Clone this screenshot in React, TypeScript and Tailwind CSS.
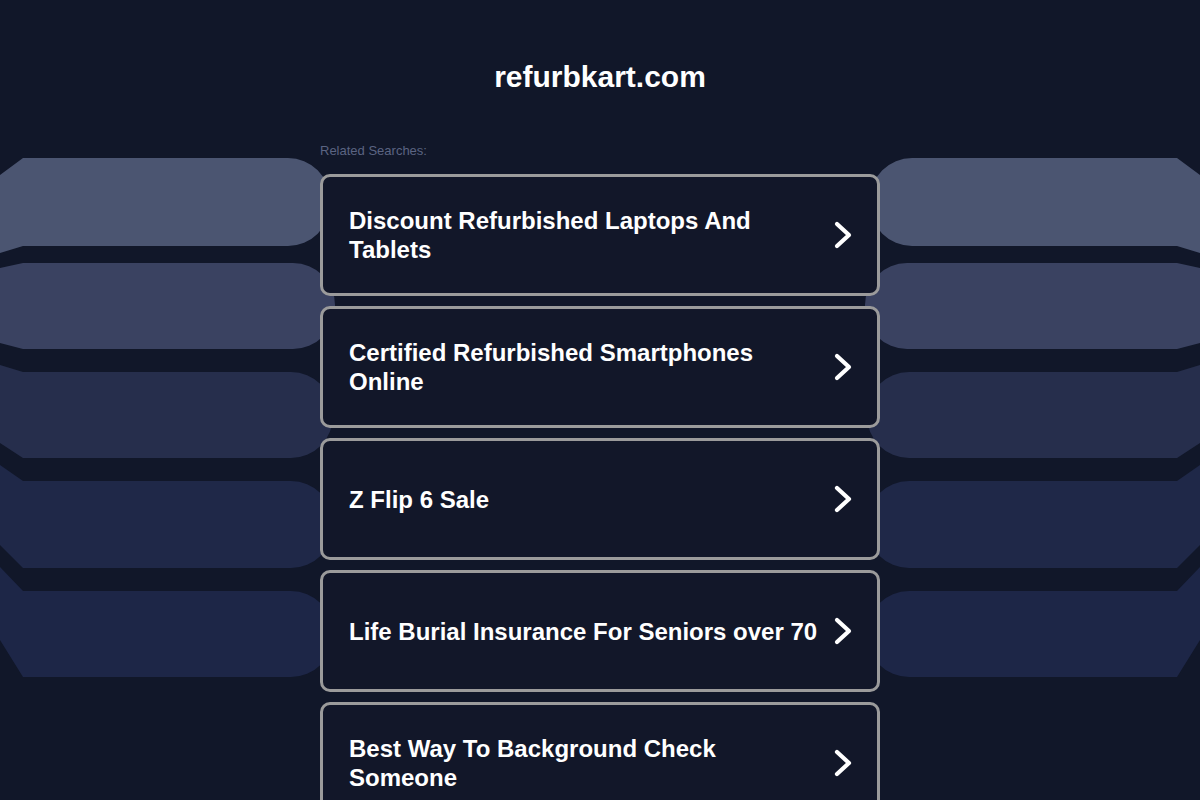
import React from "react";

type Band = {
  top: number;
  bot: number;
  leftTop: number;
  leftBot: number;
  end: number;
  color: string;
};

const bands: Band[] = [
  { top: 158, bot: 246, leftTop: 175, leftBot: 253, end: 330, color: "#4b5571" },
  { top: 263, bot: 349, leftTop: 268, leftBot: 343, end: 335, color: "#3a4261" },
  { top: 372, bot: 458, leftTop: 365, leftBot: 443, end: 333, color: "#262e4c" },
  { top: 481, bot: 568, leftTop: 465, leftBot: 545, end: 333, color: "#1f2848" },
  { top: 591, bot: 677, leftTop: 567, leftBot: 640, end: 333, color: "#1d2647" },
];

const searches = [
  "Discount Refurbished Laptops And Tablets",
  "Certified Refurbished Smartphones Online",
  "Z Flip 6 Sale",
  "Life Burial Insurance For Seniors over 70",
  "Best Way To Background Check Someone",
];

function bandPath(b: Band) {
  const r = 42;
  return `M0 ${b.leftTop} L23 ${b.top} L${b.end - r} ${b.top} A${r} ${r} 0 0 1 ${b.end} ${b.top + r} L${b.end} ${b.bot - r} A${r} ${r} 0 0 1 ${b.end - r} ${b.bot} L23 ${b.bot} L0 ${b.leftBot} Z`;
}

function Backdrop() {
  return (
    <svg
      className="absolute inset-0 pointer-events-none"
      width="1200"
      height="800"
      viewBox="0 0 1200 800"
    >
      {bands.map((b, i) => (
        <g key={i}>
          <path d={bandPath(b)} fill={b.color} />
          <path d={bandPath(b)} fill={b.color} transform="translate(1200 0) scale(-1 1)" />
        </g>
      ))}
    </svg>
  );
}

function Chevron() {
  return (
    <svg width="20" height="30" viewBox="0 0 20 30" className="shrink-0">
      <path
        d="M4 4 L16 15 L4 26"
        fill="none"
        stroke="white"
        strokeWidth="4.2"
        strokeLinecap="round"
        strokeLinejoin="round"
      />
    </svg>
  );
}

export default function App() {
  return (
    <div
      className="relative w-full h-[800px] overflow-hidden bg-[#111729]"
      style={{ fontFamily: '"Liberation Sans", Arial, sans-serif' }}
    >
      <Backdrop />
      <div className="relative w-[560px] mx-auto pt-[59px]">
        <h1 className="text-center text-white font-bold text-[30px] leading-[36px]">
          refurbkart.com
        </h1>
        <div className="mt-[48px] text-[13px] leading-[16px] text-[#5b6482]">
          Related Searches:
        </div>
        <div className="mt-[15px] flex flex-col gap-[10px]">
          {searches.map((s) => (
            <a
              key={s}
              href="#"
              className="flex items-center justify-between h-[122px] rounded-[10px] border-[3px] border-[#9b9b9b] bg-[#121729] pl-[26px] pr-[24px]"
            >
              <span className="text-white font-bold text-[24px] leading-[29px] pr-[10px]">
                {s}
              </span>
              <Chevron />
            </a>
          ))}
        </div>
      </div>
    </div>
  );
}
